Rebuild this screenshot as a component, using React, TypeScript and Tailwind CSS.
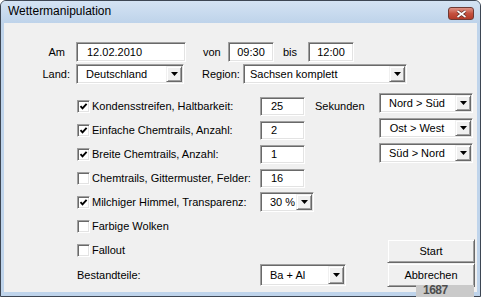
import React from 'react';

const sunken =
  'bg-white border border-t-[#a0a0a0] border-l-[#a0a0a0] border-b-white border-r-white shadow-[inset_1px_1px_0_#696969,inset_-1px_-1px_0_#e3e3e3]';
const raised =
  'bg-[#f0f0f0] border border-t-[#f0f0f0] border-l-[#f0f0f0] border-b-[#696969] border-r-[#696969] shadow-[inset_1px_1px_0_#ffffff,inset_-1px_-1px_0_#a0a0a0]';

const Field = ({ value, className = '', center = false }: { value: string; className?: string; center?: boolean }) => (
  <div className={`flex items-center ${sunken} ${center ? 'justify-center' : 'pl-[10px]'} ${className}`}>
    <span className="leading-none whitespace-nowrap">{value}</span>
  </div>
);

const Combo = ({ value, className = '', textClass = 'pl-[9px]' }: { value: string; className?: string; textClass?: string }) => (
  <div className={`flex items-stretch ${sunken} ${className}`}>
    <div className={`flex-1 min-w-0 flex items-center ${textClass}`}>
      <span className="leading-none whitespace-nowrap">{value}</span>
    </div>
    <div className={`w-[16px] shrink-0 m-[1px] flex items-center justify-center ${raised}`}>
      <svg width="7" height="4" viewBox="0 0 7 4">
        <path d="M0 0h7L3.5 4z" fill="#000" />
      </svg>
    </div>
  </div>
);

const CheckBox = ({ checked }: { checked: boolean }) => (
  <div className={`w-[13px] h-[13px] flex items-center justify-center ${sunken}`}>
    {checked && (
      <svg width="9" height="9" viewBox="0 0 9 9">
        <path d="M1.5 4.2 L3.5 6.3 L7.6 1.8" stroke="#000" strokeWidth="1.9" fill="none" />
      </svg>
    )}
  </div>
);

const Row = ({ checked, label, children }: { checked: boolean; label: string; children?: React.ReactNode }) => (
  <div className="h-[24px] flex items-center">
    <CheckBox checked={checked} />
    <span className="ml-[2px] w-[168px] leading-none whitespace-nowrap">{label}</span>
    {children}
  </div>
);

const Button = ({ label }: { label: string }) => (
  <div className={`h-[24px] w-[88px] flex items-center justify-center ${raised}`}>
    <span className="leading-none">{label}</span>
  </div>
);

export default function App() {
  return (
    <div className="w-[481px] h-[297px] relative overflow-hidden font-['Liberation_Sans',Arial,sans-serif] text-[11px] text-black">
      <div className="w-full h-full flex flex-col bg-[#bfd4eb] border border-[#3d4653] rounded-t-[6px]">
        {/* title bar */}
        <div className="h-[22px] flex items-start bg-gradient-to-b from-[#d4e3f3] to-[#bed3ea] rounded-t-[5px]">
          <span className="mt-[4px] ml-[7px] text-[12px] leading-none">Wettermanipulation</span>
          <div className="ml-auto mr-[6px] mt-[6px] w-[26px] h-[13px] rounded-[3px] border border-[#6e3a34] bg-gradient-to-b from-[#dd9286] via-[#c5513f] to-[#b33a28] flex items-center justify-center">
            <svg width="11" height="8" viewBox="0 0 11 8">
              <path d="M1.5 1 L9.5 7 M9.5 1 L1.5 7" stroke="#5a2a24" strokeWidth="3" />
              <path d="M1.5 1 L9.5 7 M9.5 1 L1.5 7" stroke="#ffffff" strokeWidth="1.6" />
            </svg>
          </div>
        </div>

        {/* client area */}
        <div className="flex-1 mx-[3px] mb-[4px] bg-[#f0f0f0] flex flex-col pt-[19px]">
          <div className="h-[20px] flex items-center">
            <span className="w-[61px] text-right leading-none">Am</span>
            <Field value="12.02.2010" className="ml-[11px] w-[110px] h-[20px]" />
            <span className="ml-[17px] w-[25px] leading-none">von</span>
            <Field value="09:30" center className="w-[46px] h-[20px]" />
            <span className="ml-[9px] w-[25px] leading-none">bis</span>
            <Field value="12:00" center className="w-[46px] h-[20px]" />
          </div>

          <div className="mt-[2px] h-[20px] flex items-center">
            <span className="w-[66px] text-right leading-none">Land:</span>
            <Combo value="Deutschland" className="ml-[6px] w-[108px] h-[20px]" />
            <span className="ml-[18px] w-[41px] leading-none">Region:</span>
            <Combo value="Sachsen komplett" textClass="pl-[6px]" className="w-[164px] h-[20px]" />
          </div>

          <div className="mt-[9px] flex">
            <div className="flex-1 flex flex-col pl-[73px] pt-[1px]">
              <Row checked label="Kondensstreifen, Haltbarkeit:">
                <Field value="25" className="w-[45px] h-[19px]" />
                <span className="ml-[10px] leading-none">Sekunden</span>
              </Row>
              <Row checked label="Einfache Chemtrails, Anzahl:">
                <Field value="2" className="w-[45px] h-[19px]" />
              </Row>
              <Row checked label="Breite Chemtrails, Anzahl:">
                <Field value="1" className="w-[45px] h-[19px]" />
              </Row>
              <Row checked={false} label="Chemtrails, Gittermuster, Felder:">
                <Field value="16" className="w-[45px] h-[19px]" />
              </Row>
              <Row checked label="Milchiger Himmel, Transparenz:">
                <Combo value="30 %" textClass="pl-[9px]" className="w-[54px] h-[20px]" />
              </Row>
              <Row checked={false} label="Farbige Wolken" />
              <Row checked={false} label="Fallout" />
              <div className="h-[26px] flex items-center">
                <span className="w-[183px] leading-none">Bestandteile:</span>
                <Combo value="Ba + Al" className="w-[86px] h-[22px]" />
              </div>
            </div>

            <div className="w-[96px] mr-[2px] flex flex-col">
              <div className="flex flex-col gap-[5px]">
                <Combo value="Nord > Süd" textClass="justify-center" className="w-[94px] h-[20px]" />
                <Combo value="Ost > West" textClass="justify-center" className="w-[94px] h-[20px]" />
                <Combo value="Süd > Nord" textClass="justify-center" className="w-[94px] h-[20px]" />
              </div>
              <div className="mt-[76px] ml-auto flex flex-col">
                <Button label="Start" />
                <Button label="Abbrechen" />
              </div>
            </div>
          </div>
        </div>
      </div>

      {/* watermark */}
      <div className="absolute left-[416px] top-[285px] w-[58px] h-[12px] bg-[#cacaca] flex items-start pl-[7px]">
        <span className="text-[12px] font-bold text-[#4e4e4e] leading-[10px] tracking-[-0.5px]">1687</span>
      </div>
    </div>
  );
}
